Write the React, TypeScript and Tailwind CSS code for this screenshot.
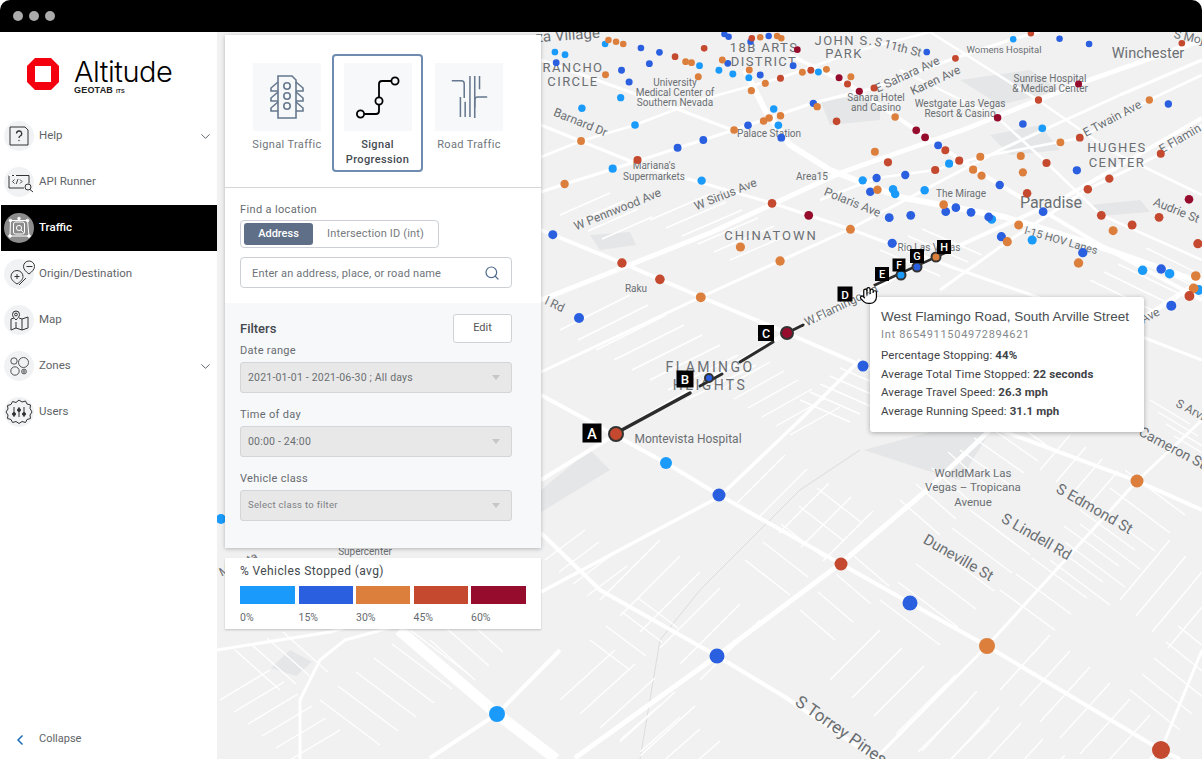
import { ChevronDown, ChevronLeft, Hand, Search } from 'lucide-react';
import type { ReactNode } from 'react';

const LIGHT = '#1a9bfc';
const BLUE = '#2a5fe0';
const ORANGE = '#dc7f3c';
const RED = '#c4492f';
const DARK = '#960c2c';

// dots of the upper map, read off a 2.372 x 3 crop starting at 541,30
const upperDots: [string, number[][]][] = [
  [LIGHT, [[152,42],[33,66],[57,74],[376,107],[422,121],[455,132],[493,143],[189,203],[97,235],[223,285],[552,237],[563,286],[170,416],[381,452],[835,478],[840,492],[763,451],[910,481],[1069,568],[1165,630],[1427,721],[1491,731],[968,401],[658,126],[1120,28],[1189,295],[1560,780]]],
  [BLUE, [[237,54],[281,67],[443,100],[257,101],[191,121],[209,156],[36,98],[520,135],[598,107],[385,330],[324,353],[491,286],[570,323],[28,614],[826,563],[877,556],[781,485],[796,444],[864,435],[960,545],[984,533],[1020,547],[1062,561],[1092,620],[1285,668],[1471,717],[1495,827],[1271,421],[1088,465],[942,346],[646,220],[1230,26],[1300,42],[915,66],[1143,282],[1488,222],[497,35],[435,12],[445,20],[540,18],[833,640],[1191,545]]],
  [ORANGE, [[160,30],[178,35],[195,42],[343,95],[357,98],[430,90],[153,134],[373,140],[494,120],[532,160],[499,182],[95,333],[458,300],[528,273],[541,264],[568,257],[56,462],[379,802],[473,651],[567,693],[734,598],[798,479],[955,524],[1106,635],[1133,585],[1275,699],[1553,738],[1548,775],[1357,602],[1232,337],[1143,427],[1138,378],[1042,380],[1025,419],[1045,437],[792,365],[840,261],[655,230],[735,140],[677,118],[620,127],[1443,210],[520,22],[560,18],[570,25]]],
  [RED, [[318,80],[387,55],[568,145],[229,390],[192,699],[282,748],[548,520],[1538,798],[1558,641],[1402,585],[1466,562],[1329,556],[1297,478],[1348,446],[1470,371],[1278,323],[1199,399],[992,392],[959,361],[935,420],[823,397],[701,274],[790,174],[727,162],[640,121],[983,85],[1162,10],[1520,40],[1180,210],[500,25],[1153,490]]],
  [DARK, [[635,556],[1537,508],[911,322],[890,301],[755,184],[707,143],[1275,162],[1083,263],[608,59]]],
];

const lowerDots: [number, number, string, number][] = [
  [221, 519, LIGHT, 5],
  [579, 318, BLUE, 5],
  [863, 366, BLUE, 5.5],
  [666, 463, LIGHT, 6],
  [719, 495, BLUE, 6.5],
  [841, 564, RED, 6.5],
  [910, 603, BLUE, 7.5],
  [987, 646, ORANGE, 8],
  [717, 656, BLUE, 7.5],
  [497, 714, LIGHT, 8],
  [1137, 481, ORANGE, 6.5],
  [1161, 750, RED, 9],
];

const roads: [string, number][] = [
  ['541,480 616,434 787,333 936,256 1060,200 1202,118', 4],
  ['541,372 701,297 850,229 1000,150 1120,95 1202,60', 3],
  ['541,300 710,233 840,173 963,130 1081,83 1202,40', 5],
  ['541,192 565,184 613,169 678,148 734,130 769,118 813,103 874,88 955,58 1013,39 1040,32', 3],
  ['541,157 581,141 635,125 700,100 780,78 860,50 930,32', 2.5],
  ['430,758 497,714 560,650', 4],
  ['541,592 719,497 800,420 860,360', 3.5],
  ['575,758 717,656 840,564 927,490 990,430 1040,385 1140,320 1202,280', 5],
  ['876,758 987,646 1137,481 1202,420', 3],
  ['1150,759 1161,750 1202,650', 3],
  ['541,395 666,463 719,495 841,564 910,603 987,646 1161,750 1180,759', 4],
  ['541,533 600,590 717,656 785,697 876,759', 4],
  ['399,630 497,714 556,759', 11],
  ['541,230 622,263 701,297 787,333 863,366 1000,430 1137,481 1202,510', 4],
  ['541,125 640,165 772,203 850,229 960,270 1060,305 1202,360', 3],
  ['745,70 765,110 790,145 830,170 899,197 1005,217 1089,243 1202,283', 6],
  ['790,55 848,84 916,130 945,150 1000,185 1100,245 1202,300', 4],
  ['900,70 998,118 1047,163 1101,215 1202,260', 2.5],
  ['930,32 1038,100 1109,150 1202,195', 2.5],
  ['940,290 1007,242 1088,189 1161,154 1202,125', 3],
  ['820,200 877,178 935,170 980,157 1080,138 1149,100 1202,75', 2.5],
  ['217,650 330,632 400,612', 3],
  ['300,759 300,700 320,660 345,640 400,625', 3],
  ['541,60 680,110 745,135', 3],
];

// x, y, segment dx, dy, step dx, dy, count
const sideStreets: number[][] = [
  [735, 505, 50, -50, 22, 14, 5],
  [600, 600, 60, -60, 20, 16, 6],
  [745, 560, 45, 35, 18, -18, 5],
  [800, 610, 35, 30, 18, -18, 4],
  [880, 600, 60, 45, 18, -18, 6],
  [830, 680, 50, -50, 22, 18, 6],
  [900, 735, 55, -60, 22, 16, 6],
  [1000, 690, 50, -55, 20, 16, 6],
  [1050, 560, 60, 45, 15, -18, 6],
  [1000, 590, 55, 40, 16, -16, 6],
  [1120, 600, 50, -60, 16, 16, 4],
  [1130, 690, 50, 40, 12, -16, 5],
  [900, 500, 40, 35, 16, -16, 4],
  [960, 450, 50, 35, 14, -12, 4],
  [1040, 470, 30, -35, 16, 12, 5],
  [560, 700, 55, -50, 20, 14, 5],
  [620, 740, 40, -35, 20, 12, 4],
  [590, 640, 40, 30, 16, -14, 4],
  [220, 700, 50, -30, 14, 12, 6],
  [320, 700, 60, 45, 18, -14, 6],
  [235, 650, 45, 40, 16, -6, 4],
  [430, 640, 45, 40, 14, -14, 3],
  [545, 560, 40, -30, 14, 12, 4],
  [560, 330, 70, -35, 18, 10, 8],
  [650, 220, 60, -26, 16, 8, 6],
  [560, 215, 50, -22, 14, 8, 4],
  [880, 250, 60, 26, 14, -7, 4],
  [1090, 280, 70, 34, 14, -8, 5],
  [1150, 400, 40, 24, 8, 12, 4],
  [720, 390, 50, -28, 14, 9, 6],
  [800, 400, 50, 22, 10, -8, 5],
];

const grayAreas = [
  '541,490 590,450 610,470 541,512',
  '864,450 930,432 990,432 960,480 925,470',
  '590,235 630,232 636,245 600,250',
  '820,100 880,95 880,120 830,125',
  '960,80 1030,70 1060,90 1000,105',
  '990,135 1040,125 1060,150 1010,155',
  '1090,205 1140,200 1150,212 1100,216',
  '271,668 290,650 312,662 296,676',
];

// text, x, y, size, rotation, letter spacing
const labels: [string, number, number, number, number, number][] = [
  ['za Village', 568, 40, 15, -4, 0],
  ['18B ARTS', 764, 52, 13, 0, 1.4],
  ['DISTRICT', 764, 66, 13, 0, 1.4],
  ['JOHN S.', 844, 45, 13, 0, 1.4],
  ['PARK', 844, 58, 13, 0, 1.4],
  ['S 11th St', 897, 51, 12, 14, 0],
  ['Womens Hospital', 1004, 53, 9.5, 0, 0],
  ['Winchester', 1148, 58, 14.5, 0, 0],
  ['RANCHO', 573, 72, 13, 0, 1.4],
  ['CIRCLE', 573, 86, 13, 0, 1.4],
  ['University', 675, 86, 10, 0, 0],
  ['Medical Center of', 675, 96, 10, 0, 0],
  ['Southern Nevada', 675, 106, 10, 0, 0],
  ['Barnard Dr', 579, 126, 12, 22, 0],
  ['Palace Station', 769, 137, 10, 0, 0],
  ['Sahara Hotel', 876, 101, 10, 0, 0],
  ['and Casino', 876, 111, 10, 0, 0],
  ['E Sahara Ave', 909, 78, 12, -25, 0],
  ['Karen Ave', 937, 84, 12, -25, 0],
  ['Westgate Las Vegas', 960, 107, 10, 0, 0],
  ['Resort & Casino', 960, 117, 10, 0, 0],
  ['Sunrise Hospital', 1050, 82, 10, 0, 0],
  ['& Medical Center', 1050, 92, 10, 0, 0],
  ['E Twain Ave', 1114, 122, 12, -28, 0],
  ['HUGHES', 1117, 152, 13, 0, 1.4],
  ['CENTER', 1117, 167, 13, 0, 1.4],
  ['E Flamin', 1182, 142, 12, -30, 0],
  ["Mariana's", 654, 169, 10, 0, 0],
  ['Supermarkets', 654, 180, 10, 0, 0],
  ['Area15', 812, 180, 10, 0, 0],
  ['W Sirius Ave', 727, 198, 12, -22, 0],
  ['W Pennwood Ave', 619, 213, 12, -22, 0],
  ['Polaris Ave', 851, 206, 12, 22, 0],
  ['The Mirage', 961, 197, 10, 0, 0],
  ['Paradise', 1051, 208, 16, 0, 0],
  ['Audrie St', 1175, 214, 12, 22, 0],
  ['CHINATOWN', 771, 240, 13, 0, 2],
  ['Rio Las Vegas', 929, 251, 10, 0, 0],
  ['I-15 HOV Lanes', 1060, 244, 11, 16, 0],
  ['Raku', 636, 292, 10, 0, 0],
  ['l Rd', 553, 308, 12, 25, 0],
  ['W.Flamingo Rd', 843, 309, 12, -26, 0],
  ['FLAMINGO', 710, 372, 14, 0, 2.4],
  ['HEIGHTS', 710, 390, 14, 0, 2.4],
  ['Montevista Hospital', 688, 443, 12, 0, 0],
  ['WorldMark Las', 973, 477, 11.5, 0, 0],
  ['Vegas – Tropicana', 973, 491, 11.5, 0, 0],
  ['Avenue', 973, 506, 11.5, 0, 0],
  ['S Edmond St', 1092, 513, 15, 30, 0],
  ['S Lindell Rd', 1034, 541, 15, 30, 0],
  ['Duneville St', 956, 562, 15, 30, 0],
  ['S Torrey Pines', 838, 735, 17, 35, 0],
  ['Cameron St', 1170, 452, 14, 28, 0],
  ['S Arvil', 1190, 414, 12, 28, 0],
  ['S Moj', 1188, 41, 12, 12, 0],
  ['Ave', 1152, 319, 12, -28, 0],
  ['Supercenter', 365, 555, 10, 0, 0],
  ['Mounta', 240, 568, 12, -25, 0],
];

const markers: [string, number, number, number][] = [
  ['A', 592, 433, 19],
  ['B', 685, 379, 17],
  ['C', 766, 333, 16],
  ['D', 845, 294, 15],
  ['E', 882, 274, 14],
  ['F', 899, 265, 13],
  ['G', 917, 256, 14],
  ['H', 944, 247, 14],
];

const routeStops: [number, number, string, number][] = [
  [616, 434, RED, 7],
  [709, 378, BLUE, 4],
  [787, 333, DARK, 6],
  [901, 275, LIGHT, 4.5],
  [917, 267, BLUE, 4.5],
  [936, 257, ORANGE, 4.5],
];

function MapLayer() {
  return (
    <svg viewBox="217 32 985 727" className="block w-full h-full font-['Roboto',sans-serif]">
      {grayAreas.map((p) => (
        <polygon key={p} points={p} fill="#e5e6e7" />
      ))}
      <polyline points="640,759 660,640 700,590 800,490 860,450" fill="none" stroke="#dcdcdc" strokeWidth={1} />
      {sideStreets.map(([x, y, sx, sy, dx, dy, n], i) =>
        Array.from({ length: n }).map((_, j) => (
          <line
            key={`${i}-${j}`}
            x1={x + dx * j}
            y1={y + dy * j}
            x2={x + dx * j + sx}
            y2={y + dy * j + sy}
            stroke="#ffffff"
            strokeWidth={1.4}
          />
        )),
      )}
      {roads.map(([p, w]) => (
        <polyline key={p} points={p} fill="none" stroke="#ffffff" strokeWidth={w} strokeLinejoin="round" />
      ))}
      {labels.map(([text, x, y, size, rot, spacing]) => (
        <text
          key={text}
          x={x}
          y={y}
          fontSize={size}
          letterSpacing={spacing}
          textAnchor="middle"
          fill="#6b6f73"
          transform={rot ? `rotate(${rot} ${x} ${y})` : undefined}
        >
          {text}
        </text>
      ))}
      {upperDots.map(([color, pts]) =>
        pts.map(([x, y]) => {
          const px = 541 + x * 0.4216;
          const py = 30 + y / 3;
          return <circle key={`${color}-${x}-${y}`} cx={px} cy={py} r={3.2 + (py - 30) * 0.0065} fill={color} />;
        }),
      )}
      {lowerDots.map(([x, y, color, r]) => (
        <circle key={`${x}-${y}`} cx={x} cy={y} r={r} fill={color} />
      ))}
      <g stroke="#2b2b2b" fill="none" strokeLinecap="round">
        <line x1="620" y1="431" x2="690" y2="393" strokeWidth="3.5" />
        <line x1="700" y1="386" x2="722" y2="374" strokeWidth="3" />
        <line x1="740" y1="362" x2="773" y2="342" strokeWidth="3" />
        <line x1="793" y1="330" x2="803" y2="325" strokeWidth="3" />
        <line x1="875" y1="285" x2="947" y2="252" strokeWidth="2.5" />
      </g>
      {routeStops.map(([x, y, color, r]) => (
        <circle key={x} cx={x} cy={y} r={r} fill={color} stroke="#333" strokeWidth={2} />
      ))}
      {markers.map(([letter, x, y, s]) => (
        <g key={letter}>
          <rect x={x - s / 2} y={y - s / 2} width={s} height={s} fill="#000" />
          <text x={x} y={y + s * 0.3} fontSize={s * 0.78} fontWeight={500} textAnchor="middle" fill="#fff">
            {letter}
          </text>
        </g>
      ))}
    </svg>
  );
}

function IconHelp() {
  return (
    <svg viewBox="0 0 30 30" className="w-[30px] h-[30px]" fill="none" stroke="#333" strokeWidth="1">
      <path d="M6 6h15l3 3v15H6z" />
      <path d="M12.5 12.5a2.6 2.6 0 1 1 3.6 2.5c-.8.4-1.1.9-1.1 1.9" strokeWidth="1.3" />
      <circle cx="15" cy="19.5" r=".7" fill="#333" stroke="none" />
    </svg>
  );
}

function IconApi() {
  return (
    <svg viewBox="0 0 30 30" className="w-[30px] h-[30px]" fill="none" stroke="#333" strokeWidth="1">
      <path d="M20 21H5V8.5h20v8" />
      <path d="M5 8.5h3M10 8.5h2" stroke="#fff" />
      <path d="M10.5 12.5l-2 2 2 2M16 12.5l2 2-2 2M14 12l-1.8 5" strokeWidth=".9" />
      <circle cx="24" cy="20" r="3" />
      <path d="M26 22.5l3 2.5" />
    </svg>
  );
}

function IconTraffic() {
  return (
    <svg viewBox="0 0 30 30" className="w-[30px] h-[30px]" fill="none" stroke="#fff" strokeWidth="1">
      <path d="M6.5 7.5h17l1.5 15.5h-19z" />
      <rect x="9.5" y="9" width="11" height="12" rx="2" />
      <circle cx="15" cy="15" r="2.6" />
      <path d="M17 17l2.5 2.5" />
      <circle cx="6.5" cy="7.5" r="1.3" fill="#fff" />
      <circle cx="15" cy="5.5" r="1.3" fill="#fff" />
      <circle cx="23.5" cy="7.5" r="1.3" fill="#fff" />
      <circle cx="6" cy="23" r="1.3" fill="#fff" />
      <circle cx="25" cy="23" r="1.3" fill="#fff" />
    </svg>
  );
}

function IconOrigin() {
  return (
    <svg viewBox="0 0 30 30" className="w-[30px] h-[30px] overflow-visible" fill="none" stroke="#333" strokeWidth="1">
      <path d="M13 25c-4-2.5-6-5-6-7.5a6 6 0 0 1 12 0c0 2.5-2 5-6 7.5z" />
      <path d="M10.5 17.5h5M13 15v5" />
      <path d="M25 15c-3.500-2.500-5.500-5-5.500-7.500a5.500 5.500 0 0 1 11 0c0 2.500-2 5-5.500 7.500z" />
      <path d="M22.5 7.5h6" />
      <path d="M15 26l7-7" />
    </svg>
  );
}

function IconMap() {
  return (
    <svg viewBox="0 0 30 30" className="w-[30px] h-[30px]" fill="none" stroke="#333" strokeWidth="1">
      <path d="M7 14v11l5-2 6 2 6-2V12l-6 2-3-1" />
      <path d="M7 14l3-1M12 23V17M18 25V14" />
      <path d="M12 15c-2-2-3.5-3.500-3.500-5.500a3.500 3.500 0 0 1 7 0c0 2-1.500 3.500-3.500 5.500z" />
      <circle cx="12" cy="9.500" r="1.400" />
    </svg>
  );
}

function IconZones() {
  return (
    <svg viewBox="0 0 30 30" className="w-[30px] h-[30px]" fill="none" stroke="#444" strokeWidth=".9">
      <circle cx="10" cy="10" r="3.2" />
      <circle cx="19.500" cy="11.500" r="5" />
      <circle cx="11" cy="20" r="4.200" />
      <circle cx="20" cy="20.500" r="2.400" />
      <circle cx="20" cy="20.500" r=".9" />
    </svg>
  );
}

function IconUsers() {
  return (
    <svg viewBox="0 0 30 30" className="w-[30px] h-[30px] overflow-visible" fill="none" stroke="#333" strokeWidth="1">
      <path d="M15 3l3 2 3.500-1 1.500 3 3.500 1-.5 3.500L28 15l-2 3 .5 3.500-3.500 1-1.500 3-3.500-1-3 2-3-2-3.500 1-1.500-3-3.500-1 .5-3.500L2 15l2-3-.5-3.500 3.500-1 1.500-3 3.500 1z" />
      <path d="M10 10v10M15 10v10M20 10v10" />
      <circle cx="10" cy="17" r="1.500" fill="#333" />
      <circle cx="15" cy="13" r="1.500" fill="#333" />
      <circle cx="20" cy="17" r="1.500" fill="#333" />
    </svg>
  );
}

function NavItem({ icon, label, active, chevron }: { icon: ReactNode; label: string; active?: boolean; chevron?: boolean }) {
  return (
    <div className={`h-[46px] ml-px pl-[3px] pr-1 flex items-center ${active ? 'bg-black text-white font-medium' : 'text-[#5f6468]'}`}>
      <div className={`w-[30px] h-[30px] rounded-full shrink-0 ${active ? 'bg-[#8c8c8c]' : 'bg-[#f1f2f4]'}`}>{icon}</div>
      <span className="ml-[5px] text-[11.5px] flex-1">{label}</span>
      {chevron && <ChevronDown className="w-[15px] h-[15px] text-[#555b61]" strokeWidth={1.5} />}
    </div>
  );
}

function Sidebar() {
  return (
    <aside className="w-[217px] shrink-0 bg-white flex flex-col relative z-10">
      <div className="h-[81px] pt-[26px] pl-[27px] flex items-start">
        <svg viewBox="0 0 32 32" className="w-[32px] h-[32px] shrink-0">
          <path fillRule="evenodd" fill="#f5000f" d="M8 0h16l8 8v16l-8 8H8l-8-8V8zM8 8v16h16V8z" />
        </svg>
        <div className="ml-[15px] -mt-[1px]">
          <div className="font-['Inter',sans-serif] text-[29px] leading-[30px] tracking-[-0.5px] font-light text-black">Altitude</div>
          <div className="flex items-baseline font-['Liberation_Sans',sans-serif] font-bold leading-[8px] -mt-[1px] text-[#222]">
            <span className="text-[9px] tracking-[0.2px]">GEOTAB</span>
            <span className="text-[5.5px] ml-[3px]">ITS</span>
          </div>
        </div>
      </div>
      <div>
        <NavItem icon={<IconHelp />} label="Help" chevron />
        <NavItem icon={<IconApi />} label="API Runner" />
        <NavItem icon={<IconTraffic />} label="Traffic" active />
        <NavItem icon={<IconOrigin />} label="Origin/Destination" />
        <NavItem icon={<IconMap />} label="Map" />
        <NavItem icon={<IconZones />} label="Zones" chevron />
        <NavItem icon={<IconUsers />} label="Users" />
      </div>
      <div className="mt-auto h-[39px] pl-[12px] flex items-center text-[#5f6468] text-[11px]">
        <ChevronLeft className="w-[16px] h-[16px] text-[#1f6fb5]" strokeWidth={2.5} />
        <span className="ml-[11px]">Collapse</span>
      </div>
    </aside>
  );
}

function ModeCard({ label, selected, className, children }: { label: ReactNode; selected?: boolean; className: string; children: ReactNode }) {
  return (
    <div className={`h-[118px] flex flex-col items-center rounded-[4px] ${selected ? 'pt-[7px] border-2 border-[#6f8cb0]' : 'pt-[9px]'} ${className}`}>
      <div className="w-[68px] h-[68px] bg-[#f7f8fa] flex items-center justify-center">{children}</div>
      <div className={`mt-[6px] text-center text-[11px] leading-[15px] tracking-[0.35px] ${selected ? 'text-[#444b52] font-medium' : 'text-[#6f757b]'}`}>{label}</div>
    </div>
  );
}

function SelectBox({ value, faint }: { value: string; faint?: boolean }) {
  return (
    <div className="h-[31px] bg-[#e8e8e8] border border-[#d3d5d7] rounded-[3px] pl-[7px] pr-[11px] flex items-center justify-between">
      <span className={faint ? 'text-[9.5px] tracking-[0.3px] text-[#7d8185]' : 'text-[10.5px] tracking-[0.2px] text-[#6a6e72]'}>{value}</span>
      <span className="w-0 h-0 border-x-[4px] border-x-transparent border-t-[5px] border-t-[#c4c6c8]" />
    </div>
  );
}

function TopPanel() {
  return (
    <div className="absolute left-[8px] top-[3px] w-[316px] h-[513px] bg-white shadow-[0_1px_4px_rgba(0,0,0,0.25)] flex flex-col text-[#666b70]">
      <div className="h-[153px] pt-[19px] flex items-start border-b border-[#d6d6d6] pl-[17px]">
        <ModeCard label="Signal Traffic" className="w-[90px]">
          <svg viewBox="0 0 36 46" className="w-[36px] h-[46px]" fill="none" stroke="#66788e" strokeWidth="1.6">
            <path d="M9 2h14l4 4v38H9z" />
            <circle cx="18" cy="12" r="3.2" />
            <circle cx="18" cy="22" r="3.2" />
            <circle cx="18" cy="32" r="3.2" />
            <path d="M9 8l-7 6v3h7M27 8l7 6v3h-7M9 18l-7 6v3h7M27 18l7 6v3h-7M9 28l-7 6v3h7M27 28l7 6v3h-7" />
          </svg>
        </ModeCard>
        <ModeCard label={<>Signal<br />Progression</>} selected className="w-[91px]">
          <svg viewBox="0 0 46 46" className="w-[46px] h-[46px]" fill="none" stroke="#000" strokeWidth="1.8">
            <path d="M9 40h12q3 0 3-3v-6M24 24v-14q0-3 3-3h9" />
            <circle cx="5.5" cy="40" r="3.6" />
            <circle cx="24" cy="27" r="3.6" />
            <circle cx="40" cy="7" r="3.6" />
          </svg>
        </ModeCard>
        <ModeCard label="Road Traffic" className="w-[90px] ml-[1px]">
          <svg viewBox="0 0 38 46" className="w-[38px] h-[44px]" fill="none" stroke="#66788e" strokeWidth="1.6">
            <path d="M1 6h10q3 0 3 3v15M10 23v21M15 28v16M20 1v43M25 1v44M30 1v14" />
            <path d="M25 34v-8q0-3 3-3h10" />
          </svg>
        </ModeCard>
      </div>
      <div className="h-[115px] px-[15px] pt-[15px]">
        <div className="text-[11px] leading-[13px] tracking-[0.35px]">Find a location</div>
        <div className="mt-[4px] w-[199px] h-[28px] border border-[#ccd0d4] rounded-[4px] flex items-center pl-[3px]">
          <div className="w-[69px] h-[22px] rounded-[3px] bg-[#5f6f87] text-white text-[11px] font-medium flex items-center justify-center">Address</div>
          <div className="flex-1 text-center text-[11px] tracking-[0.15px] text-[#767b80]">Intersection ID (int)</div>
        </div>
        <div className="mt-[9px] w-[272px] h-[31px] border border-[#ccd0d4] rounded-[4px] pl-[11px] pr-[11px] flex items-center justify-between">
          <span className="text-[11px] leading-[13px] pt-px tracking-[0.15px] text-[#6f747a]">Enter an address, place, or road name</span>
          <Search className="w-[16px] h-[16px] text-[#4c6a8c]" strokeWidth={1.8} />
        </div>
      </div>
      <div className="flex-1 bg-[#f7f8fa] pl-[15px] pr-[29px] pt-[11px]">
        <div className="h-[29px] flex items-center justify-between">
          <span className="text-[13px] font-medium text-[#43484d]">Filters</span>
          <div className="w-[59px] h-[29px] bg-white border border-[#d0d3d6] rounded-[3px] text-[11px] text-[#555] flex items-center justify-center">Edit</div>
        </div>
        <div className="mt-[1px] text-[11px] leading-[14px] tracking-[0.3px]">Date range</div>
        <div className="mt-[4px]">
          <SelectBox value="2021-01-01 - 2021-06-30 ; All days" />
        </div>
        <div className="mt-[15px] text-[11px] leading-[14px] tracking-[0.3px]">Time of day</div>
        <div className="mt-[4px]">
          <SelectBox value="00:00 - 24:00" />
        </div>
        <div className="mt-[15px] text-[11px] leading-[14px] tracking-[0.3px]">Vehicle class</div>
        <div className="mt-[4px]">
          <SelectBox value="Select class to filter" faint />
        </div>
      </div>
    </div>
  );
}

function Legend() {
  const items = [
    ['bg-[#1a9bfc]', '0%', 'w-[55px]'],
    ['bg-[#2a5fe0]', '15%', 'w-[54px]'],
    ['bg-[#dc7f3c]', '30%', 'w-[54px]'],
    ['bg-[#c4492f]', '45%', 'w-[54px]'],
    ['bg-[#960c2c]', '60%', 'w-[55px]'],
  ];
  return (
    <div className="absolute left-[8px] top-[526px] w-[316px] h-[71px] bg-white px-[15px] pt-[6px] shadow-[0_1px_2px_rgba(0,0,0,0.2)]">
      <div className="text-[12px] leading-[15px] tracking-[0.4px] text-[#43484d]">% Vehicles Stopped (avg)</div>
      <div className="mt-[7px] flex gap-[3.5px]">
        {items.map(([bg, text, w]) => (
          <div key={text} className={w}>
            <div className={`h-[18px] ${bg}`} />
            <div className="mt-[8px] text-[10.5px] leading-[12px] text-[#666b70]">{text}</div>
          </div>
        ))}
      </div>
    </div>
  );
}

function Tooltip() {
  return (
    <div className="absolute left-[653px] top-[265px] w-[274px] h-[135px] bg-white rounded-[3px] shadow-[0_1px_5px_rgba(0,0,0,0.3)] pl-[11px] pt-[12px] text-[#3f4347]">
      <div className="font-['Liberation_Sans',sans-serif] text-[13.5px] leading-[16px] text-[#4a4e52] whitespace-nowrap">West Flamingo Road, South Arville Street</div>
      <div className="mt-[3px] text-[11px] leading-[14px] tracking-[0.7px] text-[#85898d]">Int 8654911504972894621</div>
      <div className="mt-[4px] text-[11.5px] leading-[18.5px] tracking-[0.1px]">
        <div>Percentage Stopping: <b className="font-bold">44%</b></div>
        <div>Average Total Time Stopped: <b className="font-bold">22 seconds</b></div>
        <div>Average Travel Speed: <b className="font-bold">26.3 mph</b></div>
        <div>Average Running Speed: <b className="font-bold">31.1 mph</b></div>
      </div>
    </div>
  );
}

export default function App() {
  return (
    <div className="w-[1202px] h-[759px] bg-white overflow-hidden flex flex-col font-['Roboto',sans-serif]">
      <div className="h-[32px] bg-black rounded-t-[10px] shrink-0 flex items-center gap-[6px] pl-[13px]">
        <span className="w-[10px] h-[10px] rounded-full bg-[#ababab]" />
        <span className="w-[10px] h-[10px] rounded-full bg-[#ababab]" />
        <span className="w-[10px] h-[10px] rounded-full bg-[#ababab]" />
      </div>
      <div className="flex-1 flex min-h-0">
        <Sidebar />
        <main className="flex-1 relative bg-[#f1f1f1] overflow-hidden">
          <MapLayer />
          <TopPanel />
          <Legend />
          <Tooltip />
          <Hand className="absolute left-[642px] top-[254px] w-[19px] h-[19px] text-black fill-white" strokeWidth={1.5} />
        </main>
      </div>
    </div>
  );
}
